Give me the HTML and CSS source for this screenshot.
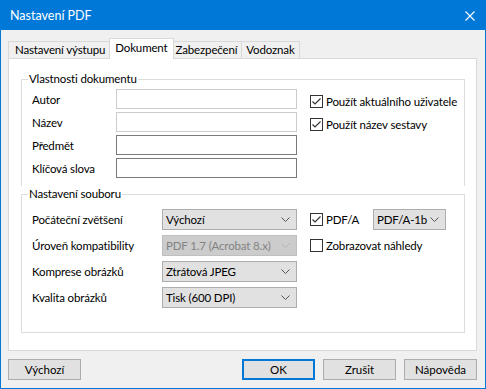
FILE: index.html
```html
<!DOCTYPE html>
<html lang="cs">

<head>
    <meta charset="UTF-8">
    <meta name="viewport" content="width=device-width, initial-scale=1.0">
    <title>Nastavení PDF</title>
    <link rel="stylesheet" href="styles.css">
</head>

<body>
    <div class="window">
        <div class="titlebar">
            <span class="title">Nastavení PDF</span>
            <svg class="close" width="10" height="10" viewBox="0 0 10 10">
                <path d="M0.5 0.5 L9.5 9.5 M9.5 0.5 L0.5 9.5" stroke="#fff" stroke-width="1.1" fill="none" />
            </svg>
        </div>

        <div class="content">
            <div class="tabs">
                <div class="tab tab-first">Nastavení výstupu</div>
                <div class="tab active">Dokument</div>
                <div class="tab">Zabezpečení</div>
                <div class="tab">Vodoznak</div>
            </div>

            <div class="panel">
                <fieldset class="group group-doc">
                    <legend>Vlastnosti dokumentu</legend>
                    <div class="group-body">
                        <div class="form-grid doc-grid">
                            <label>Autor</label>
                            <input type="text" class="field field-off">
                            <label>Název</label>
                            <input type="text" class="field field-off">
                            <label>Předmět</label>
                            <input type="text" class="field">
                            <label>Klíčová slova</label>
                            <input type="text" class="field">
                        </div>
                        <div class="checks doc-checks">
                            <div class="check">
                                <span class="box"><svg width="11" height="11" viewBox="0 0 11 11"><path d="M1.5 5.5 L4 8 L9.5 2.5" stroke="#333" stroke-width="1.2" fill="none" /></svg></span>
                                Použít aktuálního uživatele
                            </div>
                            <div class="check">
                                <span class="box"><svg width="11" height="11" viewBox="0 0 11 11"><path d="M1.5 5.5 L4 8 L9.5 2.5" stroke="#333" stroke-width="1.2" fill="none" /></svg></span>
                                Použít název sestavy
                            </div>
                        </div>
                    </div>
                </fieldset>

                <fieldset class="group group-file">
                    <legend>Nastavení souboru</legend>
                    <div class="group-body">
                        <div class="form-grid file-grid">
                            <label>Počáteční zvětšení</label>
                            <div class="combo">
                                <span>Výchozí</span>
                                <svg width="9" height="5" viewBox="0 0 9 5"><path d="M0.5 0.5 L4.5 4.5 L8.5 0.5" stroke="#555" fill="none" /></svg>
                            </div>
                            <label>Úroveň kompatibility</label>
                            <div class="combo combo-off">
                                <span>PDF 1.7 (Acrobat 8.x)</span>
                                <svg width="9" height="5" viewBox="0 0 9 5"><path d="M0.5 0.5 L4.5 4.5 L8.5 0.5" stroke="#b4b4b4" fill="none" /></svg>
                            </div>
                            <label>Komprese obrázků</label>
                            <div class="combo">
                                <span>Ztrátová JPEG</span>
                                <svg width="9" height="5" viewBox="0 0 9 5"><path d="M0.5 0.5 L4.5 4.5 L8.5 0.5" stroke="#555" fill="none" /></svg>
                            </div>
                            <label>Kvalita obrázků</label>
                            <div class="combo">
                                <span>Tisk (600 DPI)</span>
                                <svg width="9" height="5" viewBox="0 0 9 5"><path d="M0.5 0.5 L4.5 4.5 L8.5 0.5" stroke="#555" fill="none" /></svg>
                            </div>
                        </div>
                        <div class="checks file-checks">
                            <div class="check-row">
                                <div class="check check-pdfa">
                                    <span class="box"><svg width="11" height="11" viewBox="0 0 11 11"><path d="M1.5 5.5 L4 8 L9.5 2.5" stroke="#333" stroke-width="1.2" fill="none" /></svg></span>
                                    PDF/A
                                </div>
                                <div class="combo combo-small">
                                    <span>PDF/A-1b</span>
                                    <svg width="9" height="5" viewBox="0 0 9 5"><path d="M0.5 0.5 L4.5 4.5 L8.5 0.5" stroke="#555" fill="none" /></svg>
                                </div>
                            </div>
                            <div class="check-row">
                                <div class="check">
                                    <span class="box"></span>
                                    Zobrazovat náhledy
                                </div>
                            </div>
                        </div>
                    </div>
                </fieldset>
            </div>

            <div class="buttons">
                <button>Výchozí</button>
                <span class="spacer"></span>
                <button class="default">OK</button>
                <button>Zrušit</button>
                <button>Nápověda</button>
            </div>
        </div>
    </div>
</body>

</html>
```

FILE: styles.css
```css
body {
    margin: 0;
    font-family: Lato, "Noto Sans", sans-serif;
    font-size: 11.5px;
    letter-spacing: -0.15px;
    color: #000;
}

.window {
    width: 486px;
    height: 389px;
    box-sizing: border-box;
    border: 1px solid #0078d7;
    background: #f0f0f0;
    display: flex;
    flex-direction: column;
}

.titlebar {
    height: 29px;
    background: #0078d7;
    color: #fff;
    display: flex;
    align-items: center;
    justify-content: space-between;
    padding: 0 10px 0 9px;
    font-size: 12.5px;
    letter-spacing: 0;
}

.close {
    margin-top: 1px;
}

.content {
    flex: 1;
    padding: 8px 8px 0 7px;
    display: flex;
    flex-direction: column;
}

/* tabs */
.tabs {
    display: flex;
    align-items: flex-end;
    height: 20px;
}

.tab {
    height: 17px;
    box-sizing: border-box;
    border: 1px solid #d9d9d9;
    border-bottom: none;
    margin-left: -1px;
    padding: 0 4px;
    line-height: 16px;
    background: #f0f0f0;
    white-space: nowrap;
}

.tab-first {
    margin-left: 0;
    padding: 0 6px;
}

.tab.active {
    height: 21px;
    margin: 0 -2px -1px -3px;
    padding: 1px 5px 0;
    background: #fff;
    position: relative;
    z-index: 1;
}

/* panel */
.panel {
    height: 293px;
    box-sizing: border-box;
    border: 1px solid #d9d9d9;
    background: #fff;
    padding: 12px 11px 0 12px;
}

.group {
    margin: 0;
    border: 1px solid #dcdcdc;
    padding: 0 10px;
    min-width: 0;
}

.group legend {
    margin-left: -4px;
    padding: 0 1px;
    line-height: 16px;
}

.group-doc {
    border-bottom: none;
    padding-top: 2px;
    padding-bottom: 8px;
}

.group-file {
    padding-top: 7px;
    padding-bottom: 24px;
}

.group-body {
    display: flex;
    gap: 13px;
}

.form-grid {
    display: grid;
    align-items: center;
    white-space: nowrap;
}

.doc-grid {
    grid-template-columns: 84px 181px;
    grid-auto-rows: 20px;
    row-gap: 3px;
}

.file-grid {
    grid-template-columns: 130px 135px;
    grid-auto-rows: 21px;
    row-gap: 5px;
}

.field {
    height: 20px;
    box-sizing: border-box;
    border: 1px solid #7a7a7a;
    background: #fff;
    margin: 0;
    padding: 0 3px;
    font: inherit;
}

.field-off {
    border-color: #cccccc;
}

.combo {
    height: 21px;
    box-sizing: border-box;
    border: 1px solid #adadad;
    background: #e1e1e1;
    display: flex;
    align-items: center;
    justify-content: space-between;
    padding: 0 6px 0 3px;
    white-space: nowrap;
    overflow: hidden;
}

.combo-off {
    background: #cccccc;
    border-color: #bfbfbf;
    color: #838383;
}

.combo-small {
    width: 73px;
    padding: 0 6px 0 3px;
}

.checks {
    display: flex;
    flex-direction: column;
    white-space: nowrap;
}

.doc-checks {
    padding-top: 6px;
    gap: 10px;
}

.file-checks {
    gap: 5px;
}

.check-row {
    height: 21px;
    display: flex;
    align-items: center;
}

.check {
    display: flex;
    align-items: center;
    gap: 3px;
    height: 13px;
}

.check-pdfa {
    width: 63px;
}

.box {
    width: 13px;
    height: 13px;
    box-sizing: border-box;
    border: 1px solid #333;
    background: #fff;
    display: flex;
    align-items: center;
    justify-content: center;
}

/* bottom buttons */
.buttons {
    display: flex;
    gap: 8px;
    margin-top: 8px;
}

.spacer {
    flex: 1;
}

button {
    width: 73px;
    height: 21px;
    box-sizing: border-box;
    border: 1px solid #adadad;
    background: #e1e1e1;
    font: inherit;
    color: #000;
    padding: 0;
}

button.default {
    border: 2px solid #0078d7;
}
```
